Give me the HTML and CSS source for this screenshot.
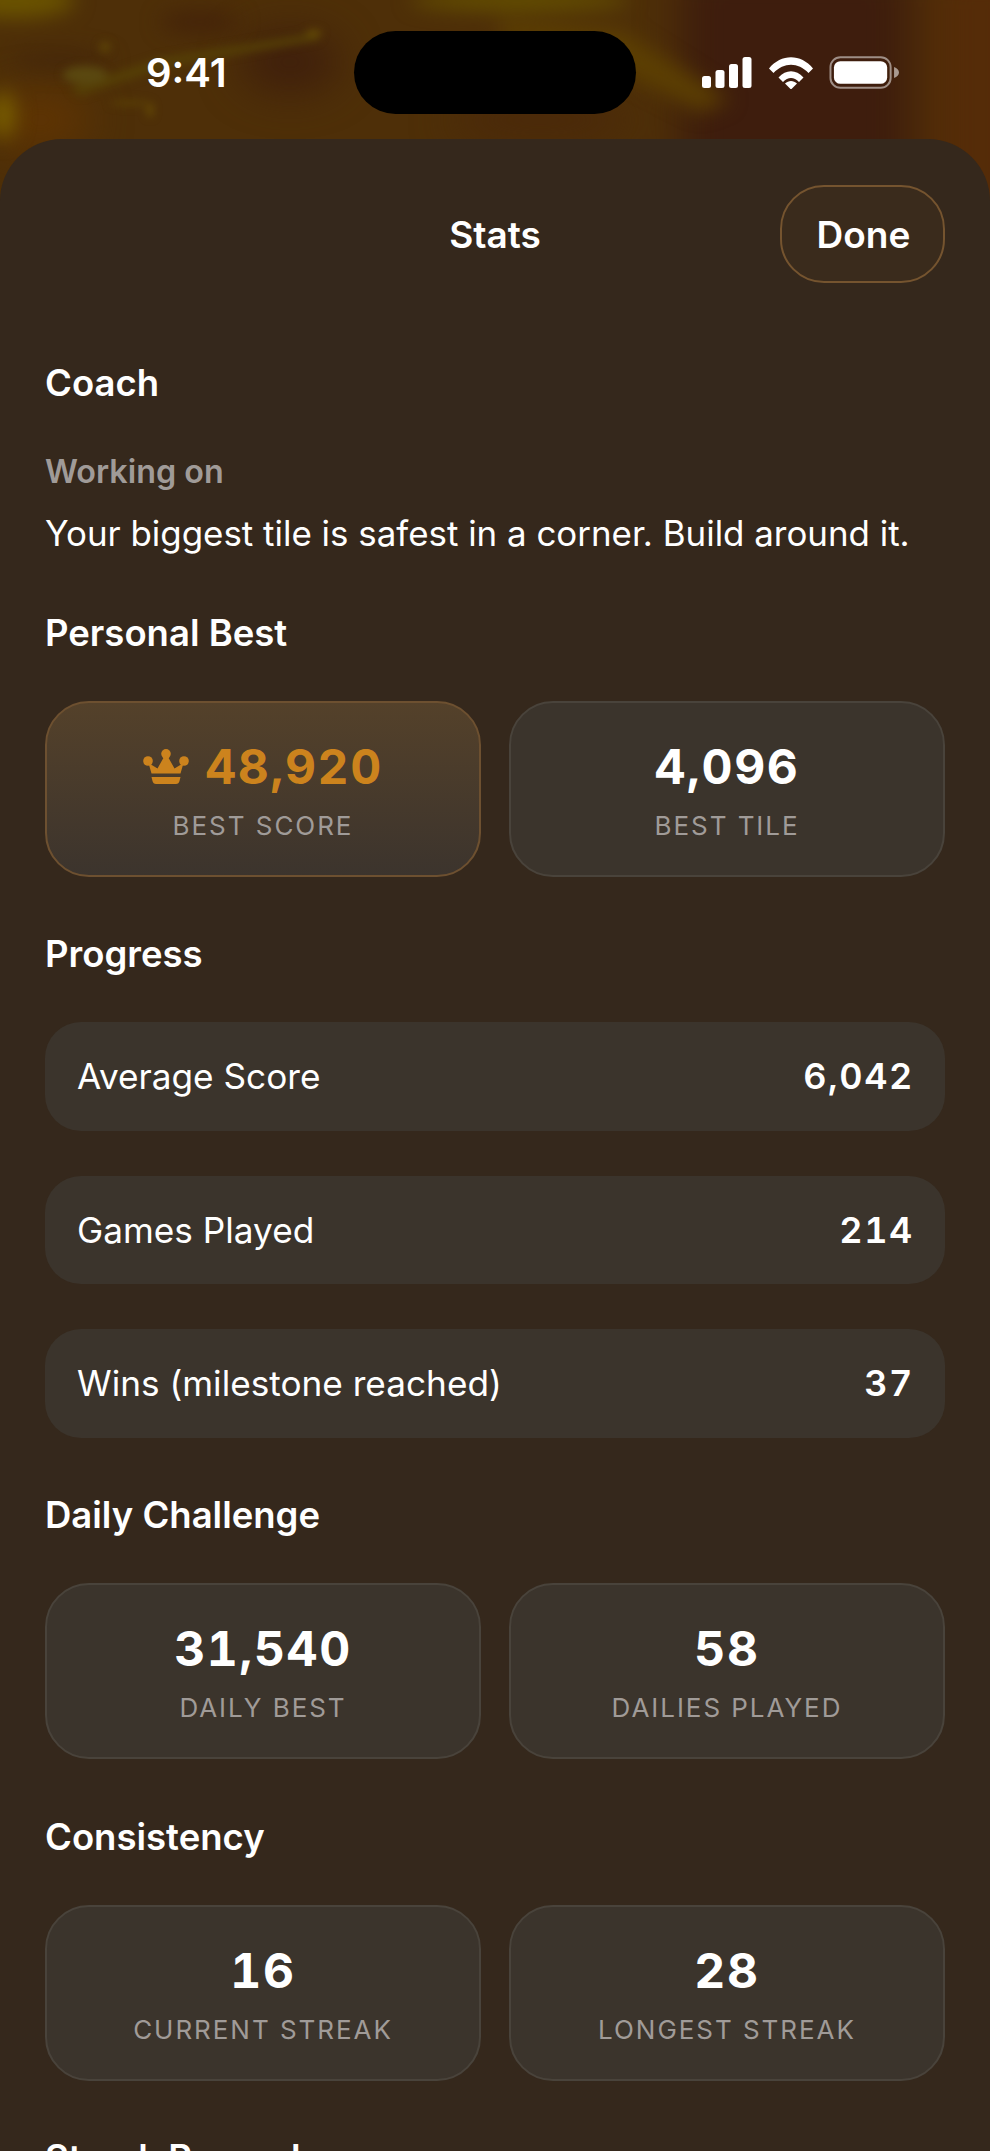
FILE: index.html
```html
<!DOCTYPE html>
<html lang="en">
<head>
    <meta charset="UTF-8">
    <meta name="viewport" content="width=device-width, initial-scale=1.0">
    <title>Stats</title>
    <link rel="stylesheet" href="styles.css">
</head>
<body>
    <div class="phone">
        <!-- blurred game board behind the sheet -->
        <svg class="backdrop" width="990" height="240" viewBox="0 0 990 240">
            <defs>
                <filter id="wide" x="-50%" y="-50%" width="200%" height="200%" color-interpolation-filters="sRGB"><feGaussianBlur stdDeviation="20"/></filter>
                <filter id="soft" x="-50%" y="-50%" width="200%" height="200%" color-interpolation-filters="sRGB"><feGaussianBlur stdDeviation="10"/></filter>
                <filter id="fine" x="-50%" y="-50%" width="200%" height="200%" color-interpolation-filters="sRGB"><feGaussianBlur stdDeviation="4"/></filter>
            </defs>
            <rect width="990" height="240" fill="#4e2f08"/>
            <g filter="url(#wide)">
                <rect x="680" y="-40" width="230" height="280" fill="#3e1d0d"/>
                <rect x="930" y="-40" width="100" height="280" fill="#552c08"/>
                <ellipse cx="290" cy="62" rx="50" ry="30" fill="#3f1f0c"/>
                <ellipse cx="540" cy="120" rx="90" ry="20" fill="#4a280a"/>
                <ellipse cx="40" cy="120" rx="50" ry="30" fill="#5f3403"/>
            </g>
            <g filter="url(#soft)">
                <ellipse cx="15" cy="0" rx="60" ry="18" fill="#6a5300"/>
                <ellipse cx="200" cy="22" rx="40" ry="12" fill="#452409"/>
                <ellipse cx="60" cy="60" rx="50" ry="10" fill="#46280a"/>
                <ellipse cx="3" cy="115" rx="12" ry="24" fill="#7a6000"/>
                <ellipse cx="520" cy="0" rx="110" ry="10" fill="#665200"/>
                <path d="M500 20L620 30L730 100L700 112L600 60L500 40Z" fill="#5c3f02"/>
            </g>
            <g filter="url(#fine)">
                <path d="M70 88L160 58L320 32L318 40L170 66L80 96Z" fill="#553f06"/>
                <ellipse cx="85" cy="75" rx="22" ry="9" fill="#5a4810"/>
                <circle cx="105" cy="47" r="5" fill="#604806"/>
                <ellipse cx="150" cy="110" rx="3" ry="7" fill="#684e04"/>
                <ellipse cx="314" cy="33" rx="8" ry="3" fill="#6a5105"/>
                <ellipse cx="130" cy="103" rx="20" ry="2.500" fill="#5c4204"/>
            </g>
        </svg>

        <div class="status-bar">
            <span class="time">9:41</span>
            <div class="island"></div>
            <div class="status-icons">
                <svg class="signal" width="50" height="32" viewBox="0 0 50 32" fill="#fff">
                    <rect x="0" y="19" width="9" height="12" rx="2.500"/>
                    <rect x="13.500" y="13" width="9" height="18" rx="2.500"/>
                    <rect x="27" y="7" width="9" height="24" rx="2.500"/>
                    <rect x="40.500" y="0" width="9" height="31" rx="2.500"/>
                </svg>
                <svg class="wifi" width="44" height="32" viewBox="0 0 44 32" fill="#fff">
                    <path d="M0 11.500C12 -3.500 32 -3.500 44 11.500L39.500 16C29 5 15 5 4.500 16Z"/>
                    <path d="M9.500 20.500C17 12 27 12 34.500 20.500L30 25C25 19.500 19 19.500 14 25Z"/>
                    <path d="M16 26.500C19.500 23 24.500 23 28 26.500L22 32.500Z"/>
                </svg>
                <svg class="battery" width="70" height="33" viewBox="0 0 71 33">
                    <rect x="1.500" y="1" width="61" height="31" rx="10" fill="none" stroke="#fff" stroke-opacity="0.5" stroke-width="2"/>
                    <rect x="5" y="5" width="54" height="23" rx="6.500" fill="#fff"/>
                    <path d="M66 11C69 12 71 14 71 16.500C71 19 69 21 66 22Z" fill="#fff" fill-opacity="0.55"/>
                </svg>
            </div>
        </div>

        <div class="sheet">
            <div class="nav">
                <h1 class="nav-title">Stats</h1>
                <button class="done-btn">Done</button>
            </div>

            <div class="coach">
                <h2 class="section-title">Coach</h2>
                <p class="coach-label">Working on</p>
                <p class="coach-text">Your biggest tile is safest in a corner. Build around it.</p>
            </div>

            <div class="section">
                <h2 class="section-title">Personal Best</h2>
                <div class="card-grid">
                    <div class="card card-best">
                        <div class="card-value">
                            <svg class="crown" width="46" height="35" viewBox="0 0 46 35" fill="#cc831d">
                                <circle cx="5" cy="12" r="4.800"/>
                                <circle cx="23" cy="4.800" r="4.800"/>
                                <circle cx="41" cy="12" r="4.800"/>
                                <path d="M5.500 14L14.500 19.500L21.500 7H24.500L31.500 19.500L40.500 14L37.500 24.500H8.500Z"/>
                                <path d="M8.500 28H37.500L36.500 32C36 34 35 35 33 35H13C11 35 10 34 9.500 32Z"/>
                            </svg>
                            <span>48,920</span>
                        </div>
                        <div class="card-label">BEST SCORE</div>
                    </div>
                    <div class="card">
                        <div class="card-value">4,096</div>
                        <div class="card-label">BEST TILE</div>
                    </div>
                </div>
            </div>

            <div class="section">
                <h2 class="section-title">Progress</h2>
                <div class="rows">
                    <div class="row"><span>Average Score</span><span class="row-value">6,042</span></div>
                    <div class="row"><span>Games Played</span><span class="row-value">214</span></div>
                    <div class="row"><span>Wins (milestone reached)</span><span class="row-value">37</span></div>
                </div>
            </div>

            <div class="section">
                <h2 class="section-title">Daily Challenge</h2>
                <div class="card-grid">
                    <div class="card">
                        <div class="card-value">31,540</div>
                        <div class="card-label">DAILY BEST</div>
                    </div>
                    <div class="card">
                        <div class="card-value">58</div>
                        <div class="card-label">DAILIES PLAYED</div>
                    </div>
                </div>
            </div>

            <div class="section">
                <h2 class="section-title">Consistency</h2>
                <div class="card-grid">
                    <div class="card">
                        <div class="card-value">16</div>
                        <div class="card-label">CURRENT STREAK</div>
                    </div>
                    <div class="card">
                        <div class="card-value">28</div>
                        <div class="card-label">LONGEST STREAK</div>
                    </div>
                </div>
            </div>

            <div class="section">
                <h2 class="section-title">Streak Rewards</h2>
            </div>
        </div>
    </div>
</body>
</html>
```

FILE: styles.css
```css
:root {
    --sheet-bg: #35281c;
    --card-bg: #3b342c;
    --card-border: #49433b;
    --muted: #a09b98;
    --amber: #cc831d;
}

* {
    box-sizing: border-box;
}

body {
    margin: 0;
    background: var(--sheet-bg);
    font-family: 'Inter', 'Liberation Sans', sans-serif;
    color: #fff;
}

h1, h2, p {
    margin: 0;
}

.phone {
    position: relative;
    width: 990px;
    height: 2151px;
    overflow: hidden;
}

.backdrop {
    position: absolute;
    top: 0;
    left: 0;
}

/* status bar */
.status-bar {
    position: relative;
    height: 139px;
    padding: 31px 91px 0 146px;
    display: flex;
    align-items: flex-start;
}

.time {
    width: 208px;
    height: 83px;
    line-height: 84px;
    font-size: 40px;
    font-weight: 600;
}

.island {
    width: 282px;
    height: 83px;
    border-radius: 42px;
    background: #000;
}

.status-icons {
    margin-left: auto;
    height: 83px;
    display: flex;
    align-items: center;
    gap: 16.500px;
}

/* sheet */
.sheet {
    position: relative;
    height: 2012px;
    padding: 46px 45px 0;
    border-radius: 62px 62px 0 0;
    background: var(--sheet-bg);
}

.nav {
    display: grid;
    grid-template-columns: 165px 1fr 165px;
    align-items: center;
}

.nav-title {
    grid-column: 2;
    text-align: center;
    font-size: 37px;
    font-weight: 600;
}

.done-btn {
    grid-column: 3;
    height: 98px;
    padding: 0 0 0 2px;
    border: 2px solid #75542f;
    border-radius: 44px;
    background: #3a2b1c;
    color: #fff;
    font-family: inherit;
    font-size: 37px;
    font-weight: 600;
}

.section-title {
    height: 44px;
    line-height: 44px;
    font-size: 36.500px;
    font-weight: 600;
}

.coach {
    margin-top: 78px;
}

.coach-label {
    margin-top: 47px;
    line-height: 40px;
    font-size: 32.300px;
    font-weight: 600;
    color: var(--muted);
}

.coach-text {
    margin-top: 19px;
    line-height: 44px;
    font-size: 34.900px;
}

.section {
    margin-top: 55.500px;
}

.section .section-title {
    margin-bottom: 46px;
}

/* stat cards */
.card-grid {
    display: grid;
    grid-template-columns: 1fr 1fr;
    gap: 28px;
}

.card {
    height: 176px;
    padding-top: 39px;
    border: 2px solid var(--card-border);
    border-radius: 44px;
    background: var(--card-bg);
    text-align: center;
}

.card-best {
    border-color: #6d5030;
    background: linear-gradient(180deg, #54412a 0%, #3c342d 100%);
}

.card-best .card-value {
    color: var(--amber);
}

.card-value {
    height: 50px;
    line-height: 50px;
    display: flex;
    justify-content: center;
    align-items: center;
    gap: 16px;
    font-size: 48px;
    font-weight: 700;
    font-variant-numeric: tabular-nums;
    letter-spacing: 1.600px;
}

.card-label {
    margin-top: 16px;
    line-height: 36px;
    font-size: 26px;
    letter-spacing: 0.075em;
    color: var(--muted);
}

/* rows */
.rows {
    display: flex;
    flex-direction: column;
    gap: 45px;
}

.row {
    height: 108.500px;
    padding: 0 31px 0 32px;
    display: flex;
    justify-content: space-between;
    align-items: center;
    border-radius: 36px;
    background: var(--card-bg);
    font-size: 35.200px;
}

.row-value {
    font-size: 36px;
    font-weight: 600;
    font-variant-numeric: tabular-nums;
    letter-spacing: 1.600px;
}
```
